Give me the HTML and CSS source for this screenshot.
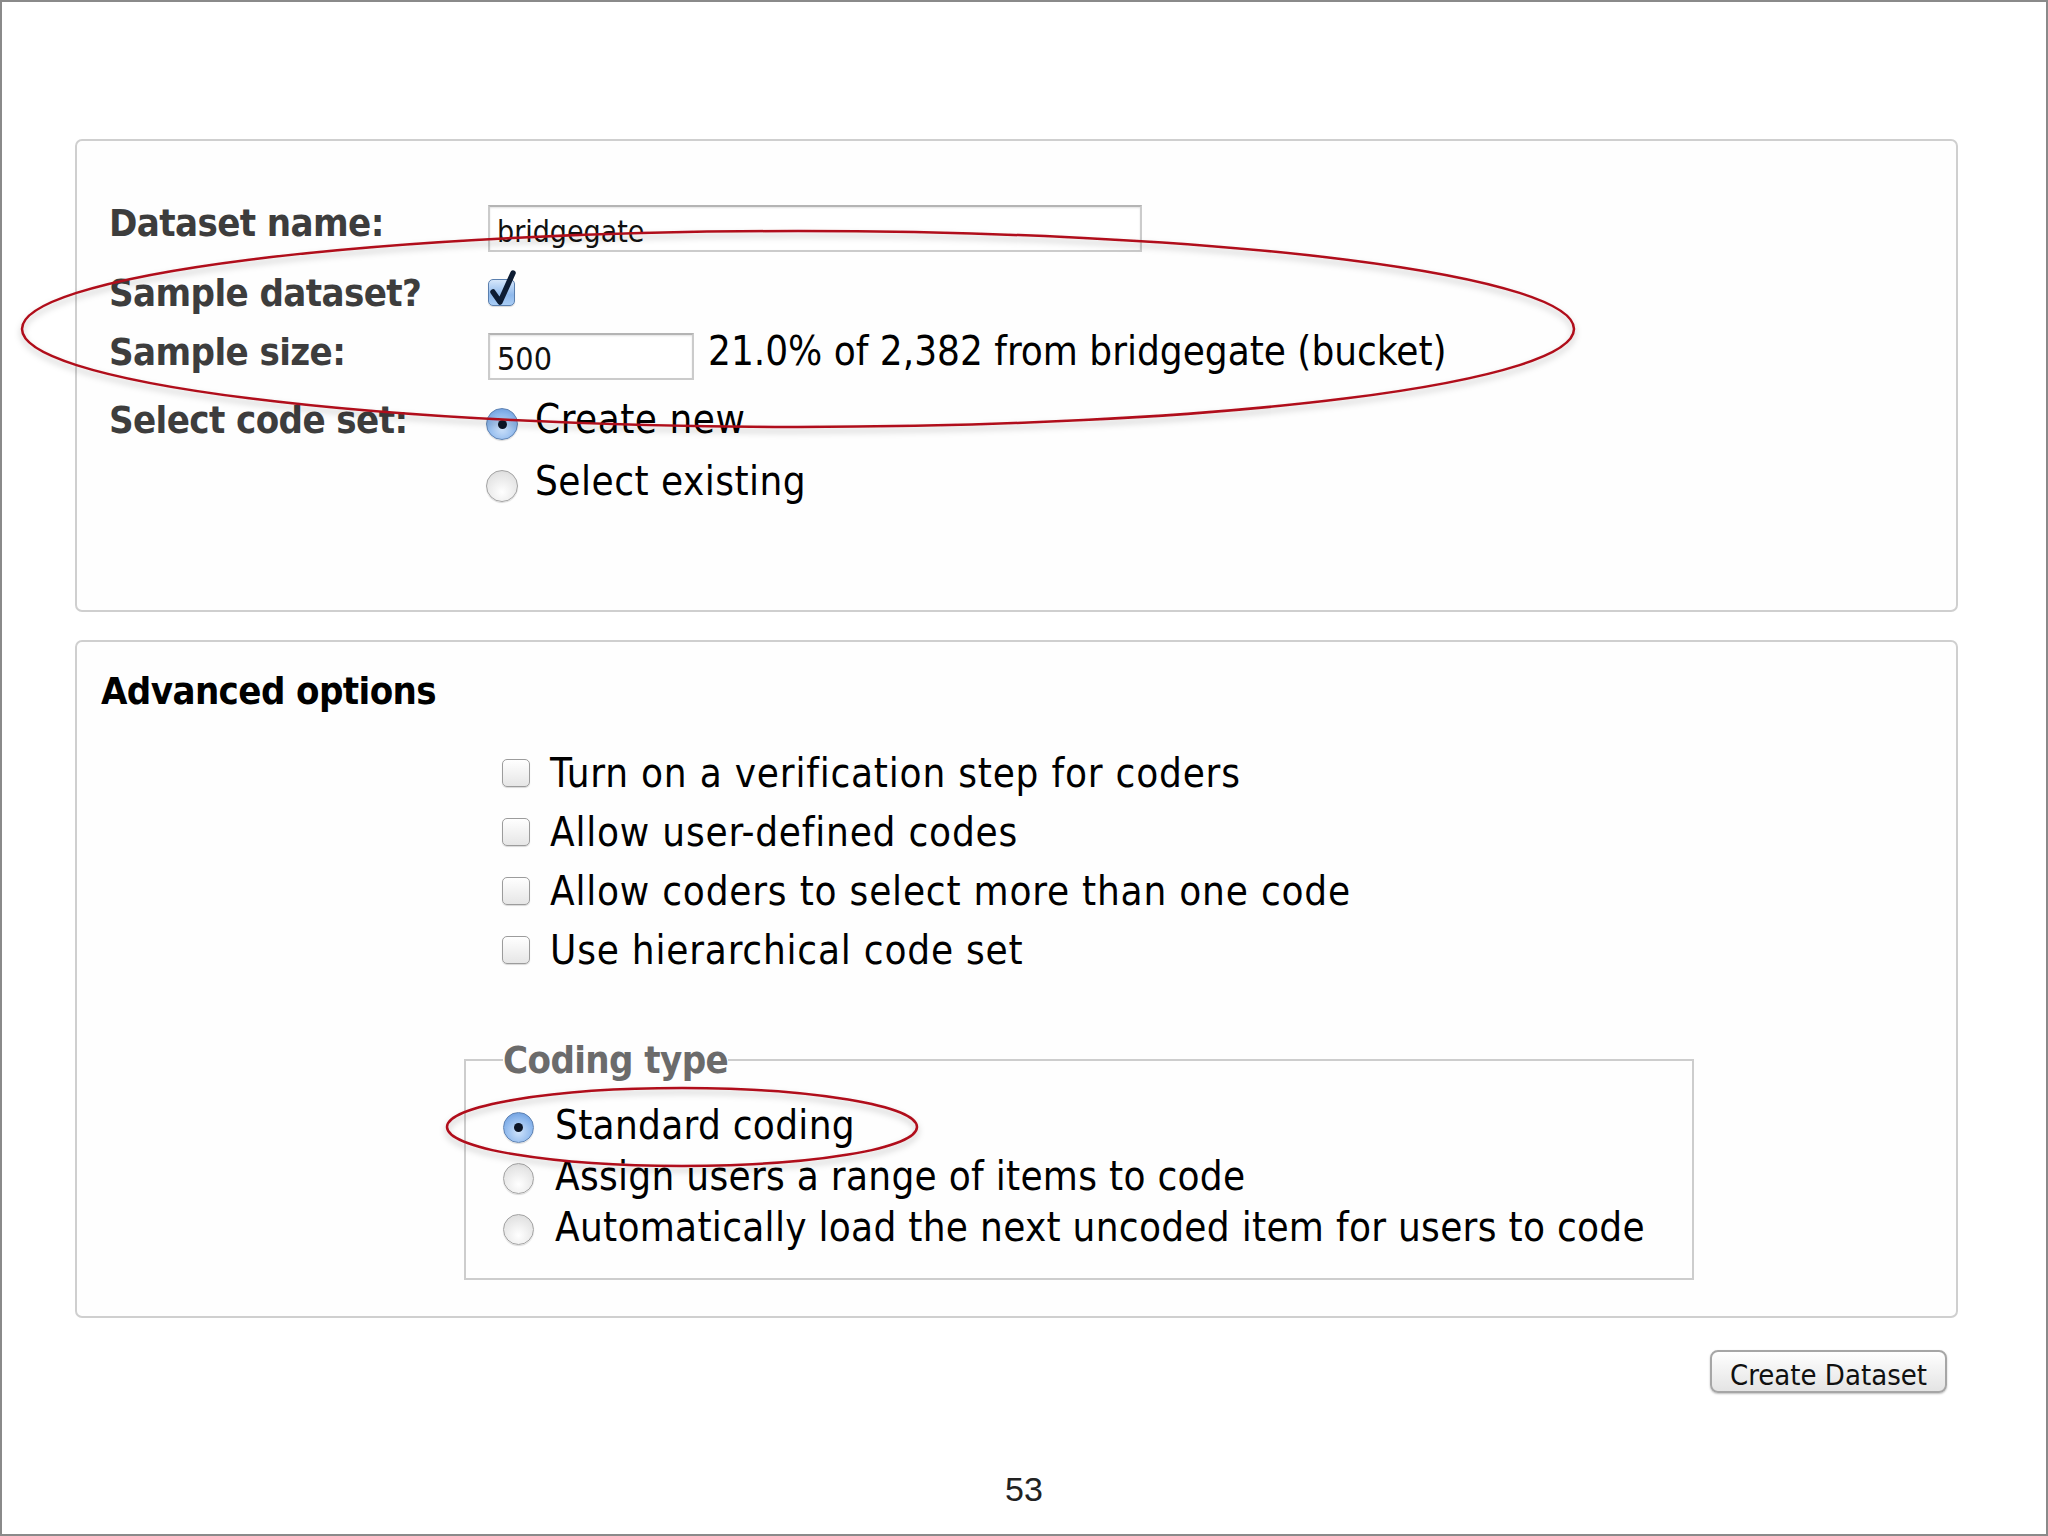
FILE: index.html
```html
<html lang="en">
    <head>
        <title>Create Dataset</title>
        <link rel="stylesheet" href="styles.css">
    </head>
    <body>
        <div class="slide">
            <form class="panel panel-main">
                <div class="row row-name">
                    <span class="label">Dataset name:</span>
                    <input class="text-input name-input" type="text" value="bridgegate">
                </div>
                <div class="row row-sample">
                    <span class="label">Sample dataset?</span>
                    <span class="check checked">
                        <svg class="tick" viewBox="0 0 34 40" width="34" height="40">
                            <path d="M6 24 L13 34 L26 5" fill="none" stroke="#0d1c33" stroke-width="5.5" stroke-linecap="round" stroke-linejoin="round"/>
                        </svg>
                    </span>
                </div>
                <div class="row row-size">
                    <span class="label">Sample size:</span>
                    <input class="text-input size-input" type="text" value="500">
                    <span class="note">21.0% of 2,382 from bridgegate (bucket)</span>
                </div>
                <div class="row row-codeset">
                    <span class="label">Select code set:</span>
                    <div class="choices">
                        <label class="choice"><span class="radio on"></span>Create new</label>
                        <label class="choice"><span class="radio"></span>Select existing</label>
                    </div>
                </div>
            </form>

            <div class="panel panel-advanced">
                <h3 class="panel-title">Advanced options</h3>
                <div class="options">
                    <label class="option"><span class="check"></span>Turn on a verification step for coders</label>
                    <label class="option"><span class="check"></span>Allow user-defined codes</label>
                    <label class="option"><span class="check"></span>Allow coders to select more than one code</label>
                    <label class="option"><span class="check"></span>Use hierarchical code set</label>
                </div>
                <fieldset class="coding-type">
                    <legend>Coding type</legend>
                    <label class="type"><span class="radio on"></span>Standard coding</label>
                    <label class="type"><span class="radio"></span>Assign users a range of items to code</label>
                    <label class="type"><span class="radio"></span>Automatically load the next uncoded item for users to code</label>
                </fieldset>
            </div>

            <div class="actions">
                <button class="button" type="button">Create Dataset</button>
            </div>

            <div class="page-number">53</div>

            <svg class="marks" viewBox="0 0 2048 1536" width="2048" height="1536">
                <defs>
                    <filter id="shade" x="-10%" y="-30%" width="120%" height="160%">
                        <feDropShadow dx="0" dy="4" stdDeviation="3" flood-color="#000" flood-opacity="0.25"/>
                    </filter>
                </defs>
                <ellipse cx="798" cy="329" rx="776" ry="98" fill="none" stroke="#b0101a" stroke-width="2.5" filter="url(#shade)"/>
                <ellipse cx="682" cy="1127" rx="235" ry="39" fill="none" stroke="#b0101a" stroke-width="2.5" filter="url(#shade)"/>
            </svg>
        </div>
    </body>
</html>
```

FILE: styles.css
```css
body {
    margin: 0;
    padding: 0;
    background-color: white;
}

.slide {
    position: relative;
    box-sizing: border-box;
    width: 2048px;
    height: 1536px;
    border: 2px solid #8a8a8a;
    padding: 137px 0 0 73px;
    background-color: white;
    font-family: "DejaVu Sans Condensed", "DejaVu Sans", sans-serif;
    font-stretch: condensed;
    font-size: 40px;
    line-height: 46px;
    color: black;
}

.panel {
    box-sizing: border-box;
    width: 1883px;
    margin: 0;
    border: 2px solid #cfcfcf;
    border-radius: 7px;
    background-color: #fefefe;
}

.panel-main {
    height: 473px;
    padding: 59px 0 0 32px;
}

.row {
    display: flex;
    align-items: baseline;
}

.row-name {
    height: 70px;
}

.row-sample {
    height: 58px;
}

.row-size {
    height: 68px;
}

.label {
    width: 379px;
    flex: none;
    font-size: 38px;
    letter-spacing: -0.6px;
    font-weight: bold;
    color: #3d3d3d;
}

.text-input {
    align-self: flex-start;
    box-sizing: border-box;
    height: 47px;
    margin: 5px 0 0;
    padding: 5px 0 0 7px;
    border: 2px solid #cbcbcb;
    border-top-color: #b4b4b4;
    box-shadow: inset 0 1px 2px rgba(0, 0, 0, 0.12);
    font-family: inherit;
    font-stretch: condensed;
    font-size: 30px;
    color: #111;
    background-color: white;
    outline: none;
}

.name-input {
    width: 654px;
}

.size-input {
    width: 206px;
    font-size: 32px;
}

.note {
    margin-left: 14px;
}

.check {
    position: relative;
    display: inline-block;
    flex: none;
    box-sizing: border-box;
    width: 28px;
    height: 28px;
    border: 1px solid #9c9c9c;
    border-radius: 5px;
    background: linear-gradient(#ffffff, #e6e6e6);
    box-shadow: 0 1px 1px rgba(0, 0, 0, 0.15);
}

.check.checked {
    width: 27px;
    height: 27px;
    border-color: #5a7fae;
    background: linear-gradient(#d6e7fb, #8fb9ec 60%, #a9cdf5);
}

.tick {
    position: absolute;
    left: -2px;
    top: -12px;
}

.choices {
    display: flex;
    flex-direction: column;
    gap: 16px;
}

.choice {
    display: flex;
    align-items: baseline;
    letter-spacing: 0.5px;
}

.option,
.type {
    display: flex;
    align-items: center;
}

.radio {
    position: relative;
    display: inline-block;
    flex: none;
    box-sizing: border-box;
    width: 32px;
    height: 32px;
    border: 1px solid #a3a3a3;
    border-radius: 50%;
    background: radial-gradient(circle at 50% 70%, #ffffff, #e4e4e4 70%, #d2d2d2);
    box-shadow: 0 1px 1px rgba(0, 0, 0, 0.15);
}

.radio.on {
    border-color: #5f83b3;
    background: radial-gradient(circle at 50% 65%, #cfe3fb, #8bb6ec 60%, #5d90d6);
}

.radio.on::after {
    content: "";
    position: absolute;
    left: 50%;
    top: 50%;
    width: 9px;
    height: 9px;
    margin: -4.5px 0 0 -4.5px;
    border-radius: 50%;
    background-color: #0c1526;
}

.choice .radio {
    align-self: center;
    margin: 10px 17px 0 -2px;
}

.panel-advanced {
    height: 678px;
    margin-top: 28px;
    padding: 26px 0 0 24px;
}

.panel-title {
    margin: 0;
    font-size: 38px;
    letter-spacing: -0.6px;
    line-height: 46px;
    font-weight: bold;
}

.options {
    margin: 29px 0 0 401px;
}

.option {
    height: 59px;
    letter-spacing: 0.8px;
}

.option .check {
    margin-right: 20px;
}

.coding-type {
    box-sizing: border-box;
    width: 1230px;
    margin: 58px 0 0 363px;
    padding: 16px 0 26px 37px;
    border: 2px solid #cdcdcd;
}

.coding-type legend {
    padding: 0;
    font-size: 38px;
    letter-spacing: -0.6px;
    font-weight: bold;
    color: #6b6b6b;
}

.type {
    height: 51px;
    letter-spacing: 0.3px;
}

.type .radio {
    width: 31px;
    height: 31px;
    margin: 6px 21px 0 0;
}

.actions {
    display: flex;
    justify-content: flex-end;
    width: 1883px;
    box-sizing: border-box;
    padding-right: 11px;
    margin-top: 32px;
}

.button {
    box-sizing: border-box;
    width: 237px;
    height: 43px;
    padding: 5px 0 0;
    border: 2px solid #a6a6a6;
    border-radius: 8px;
    background: linear-gradient(#ffffff, #f1f1f1 50%, #e4e4e4);
    box-shadow: 0 1px 2px rgba(0, 0, 0, 0.25);
    font-family: inherit;
    font-stretch: condensed;
    font-size: 29px;
    line-height: 36px;
    color: #111;
}

.page-number {
    margin-top: 76px;
    margin-left: -73px;
    text-align: center;
    font-family: "Liberation Sans", sans-serif;
    font-stretch: normal;
    font-size: 34px;
    line-height: 40px;
    color: #222;
}

.marks {
    position: absolute;
    left: -2px;
    top: -2px;
    pointer-events: none;
}
```
